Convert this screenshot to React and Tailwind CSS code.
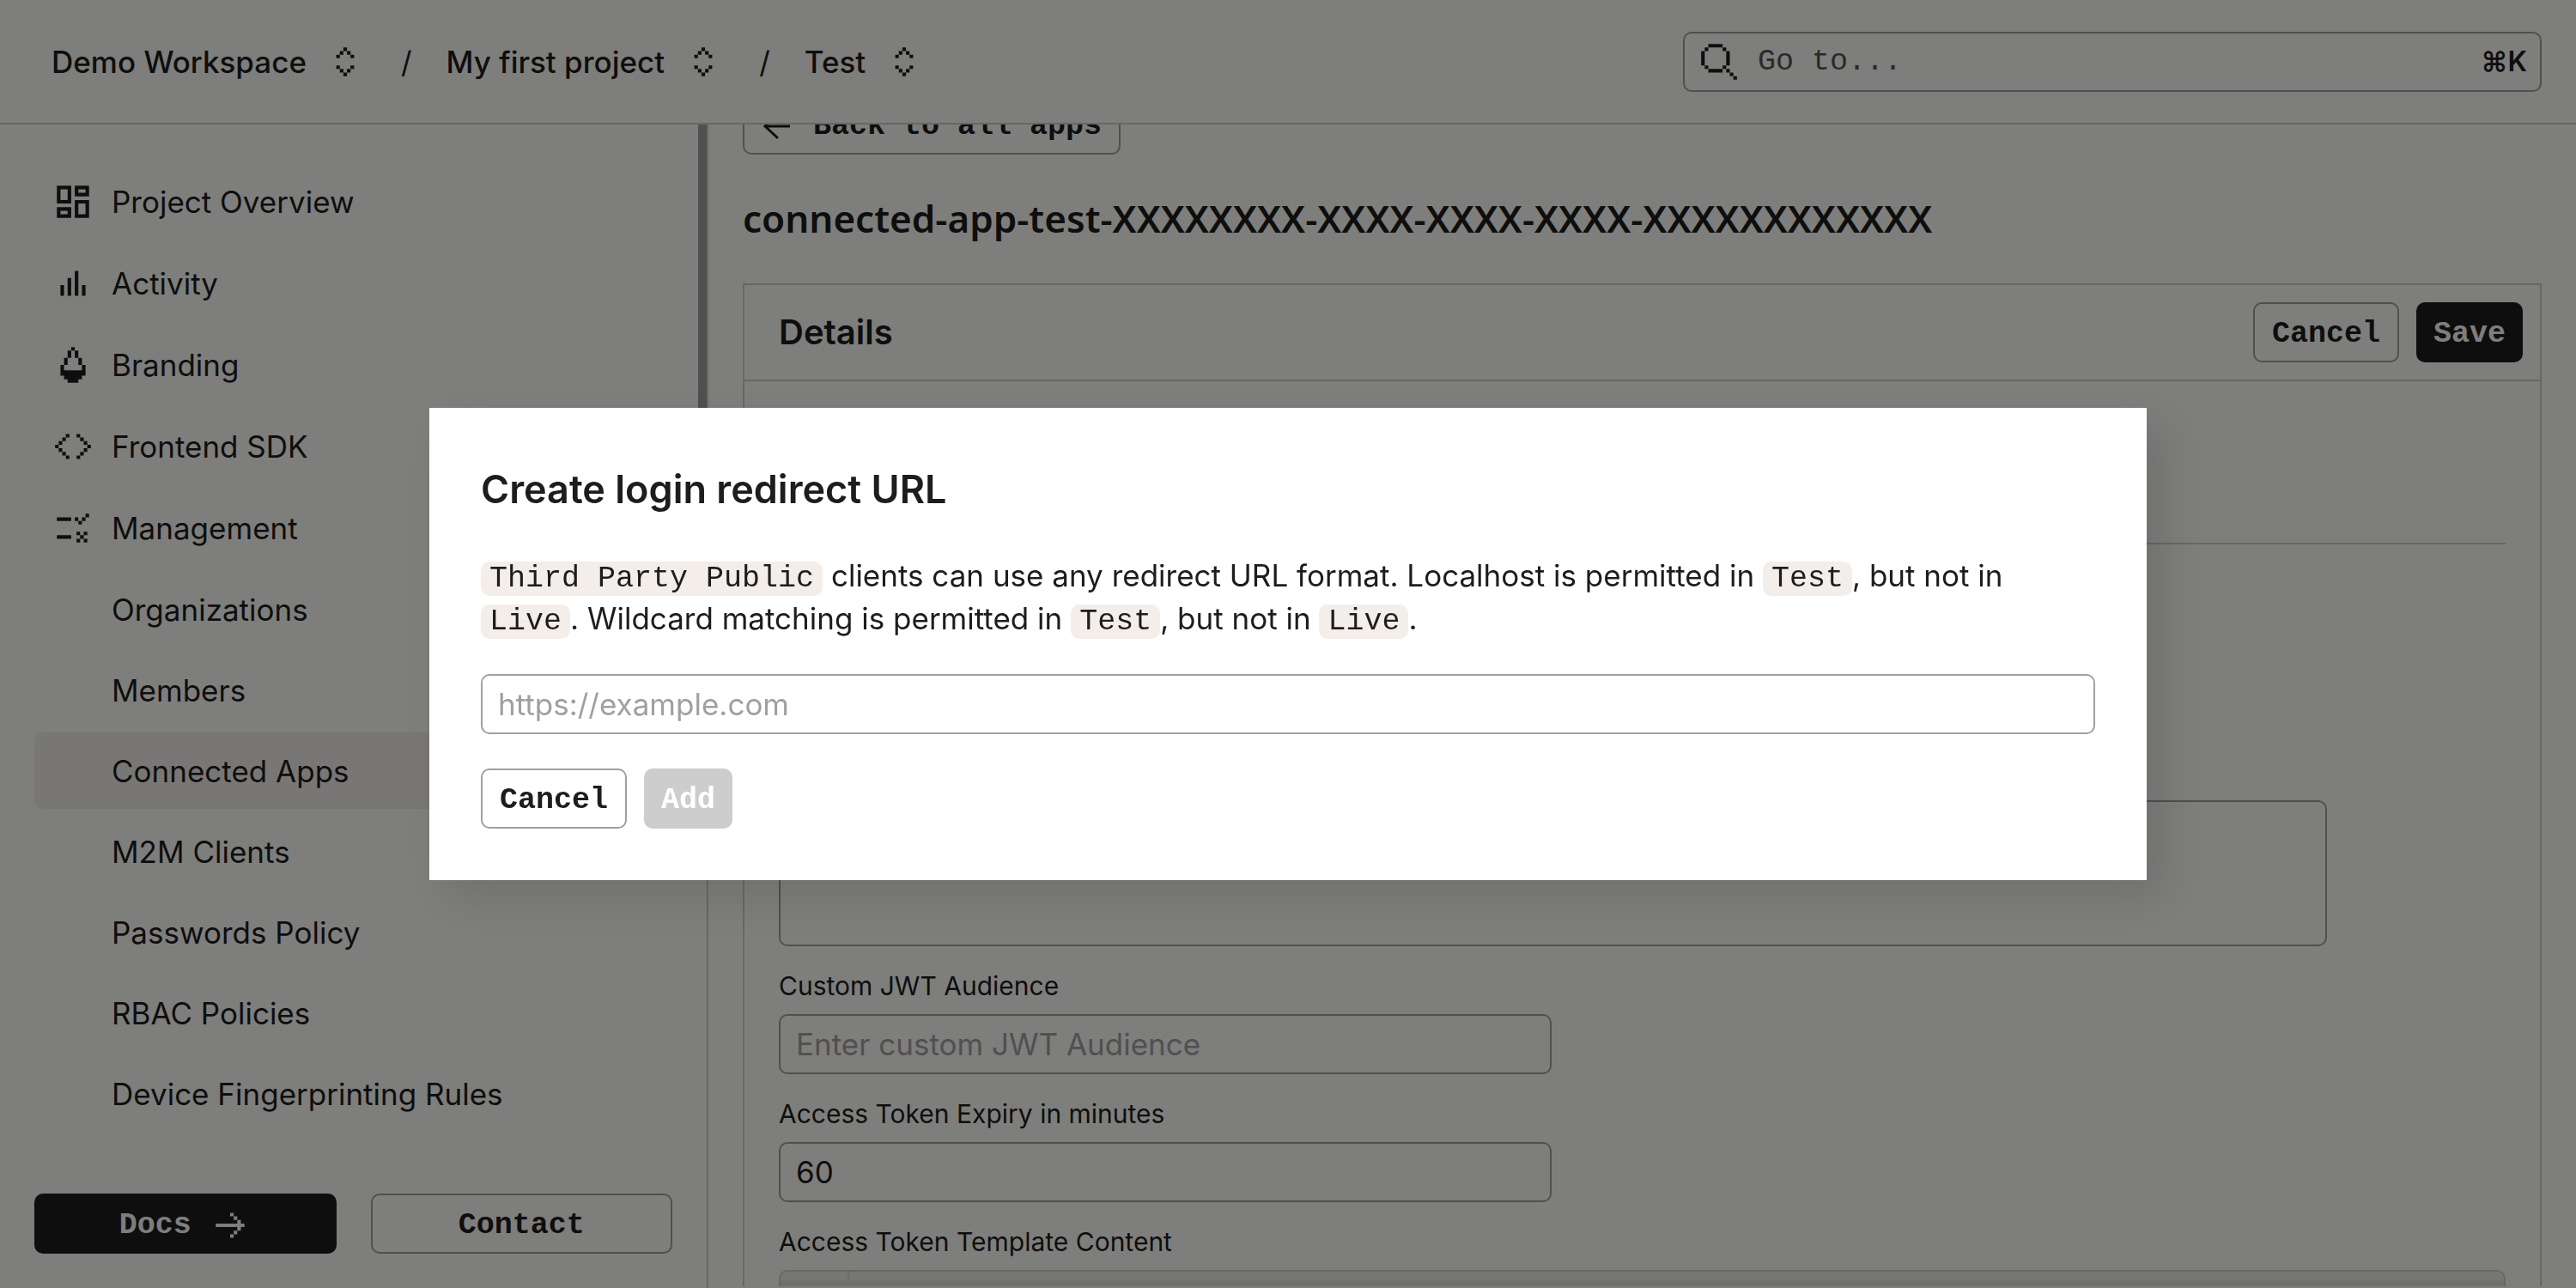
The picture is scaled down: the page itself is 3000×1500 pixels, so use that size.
const iconPaths = {
  dashboard:
    "M3 3h8v10H3zM5 5v6h4V5zM13 3h8v6h-8zM15 5v2h4V5zM3 15h8v6H3zM5 17v2h4v-2zM13 11h8v10h-8zM15 13v6h4v-6z",
  activity: "M5 13h2v6H5zM9 9h2v10H9zM13 5h2v14h-2zM17 13h2v6h-2z",
  branding:
    "M11 2h2v2h-2zM9 4h2v4H9zM13 4h2v4h-2zM7 8h2v4H7zM15 8h2v4h-2zM5 12h2v3h10v-3h2v6h-2v2h-2v2H9v-2H7v-2H5z",
  code:
    "M8 5h2v2H8zM6 7h2v2H6zM4 9h2v2H4zM2 11h2v2H2zM4 13h2v2H4zM6 15h2v2H6zM8 17h2v2H8zM14 5h2v2h-2zM16 7h2v2h-2zM18 9h2v2h-2zM20 11h2v2h-2zM18 13h2v2h-2zM16 15h2v2h-2zM14 17h2v2h-2z",
  management:
    "M3 6h8v2H3zM3 16h8v2H3zM13 6h2v2h-2zM15 8h2v2h-2zM17 6h2v2h-2zM19 4h2v2h-2zM14 14h2v2h-2zM18 14h2v2h-2zM16 16h2v2h-2zM14 18h2v2h-2zM18 18h2v2h-2z",
  upDown:
    "M11 4h2v2h-2zM9 6h2v2H9zM13 6h2v2h-2zM7 8h2v2H7zM15 8h2v2h-2zM7 14h2v2H7zM15 14h2v2h-2zM9 16h2v2H9zM13 16h2v2h-2zM11 18h2v2h-2z",
  search:
    "M6 2h8v2H6zM4 4h2v2H4zM14 4h2v2h-2zM2 6h2v8H2zM16 6h2v8h-2zM4 14h2v2H4zM14 14h2v2h-2zM6 16h8v2H6zM16 16h2v2h-2zM18 18h2v2h-2zM20 20h2v2h-2z",
  arrowRight:
    "M4 11h12V9h2v2h2v2h-2v2h-2v-2H4zM14 7h2v2h-2zM12 5h2v2h-2zM14 15h2v2h-2zM12 17h2v2h-2z",
};

const mainNav = [
  { icon: "dashboard", label: "Project Overview" },
  { icon: "activity", label: "Activity" },
  { icon: "branding", label: "Branding" },
  { icon: "code", label: "Frontend SDK" },
  { icon: "management", label: "Management" },
];

const managementNav = [
  "Organizations",
  "Members",
  "Connected Apps",
  "M2M Clients",
  "Passwords Policy",
  "RBAC Policies",
  "Device Fingerprinting Rules",
];

const mono = "font-['Liberation_Mono',monospace]";
const buttonBase = `${mono} flex h-[70px] items-center justify-center rounded-[10px] px-5 pt-1 font-bold`;
const outlineButton = `${buttonBase} border-2 border-[#a0a0a0]`;
const solidButton = `${buttonBase} bg-[#1d1d1d] text-[#fdfcf8]`;
const inputStyle =
  "h-[70px] w-full rounded-[10px] border-2 border-[#a0a0a0] bg-transparent px-[18px] placeholder:text-[#a0a0a0]";

function Icon({ name }) {
  return (
    <svg viewBox="0 0 24 24" className="size-[50px] shrink-0" fill="currentColor" fillRule="evenodd" aria-hidden="true">
      <path d={iconPaths[name]} />
    </svg>
  );
}

function Crumb({ label }) {
  return (
    <button type="button" className="flex items-center gap-5 font-medium">
      {label}
      <Icon name="upDown" />
    </button>
  );
}

function Code({ children }) {
  return (
    <code className={`${mono} rounded-[10px] bg-[#f3eeea] px-[10px] leading-none`}>{children}</code>
  );
}

function Header() {
  return (
    <header className="flex h-[145px] shrink-0 items-center justify-between border-b-2 border-[#cfcfcb] pr-10 pl-[60px]">
      <nav className="flex items-center gap-10">
        <Crumb label="Demo Workspace" />
        <span>/</span>
        <Crumb label="My first project" />
        <span>/</span>
        <Crumb label="Test" />
      </nav>
      <label className="flex h-[70px] w-[1000px] items-center gap-5 rounded-[10px] border-2 border-[#a0a0a0] px-[15px]">
        <Icon name="search" />
        <input
          type="search"
          aria-label="Go to"
          placeholder="Go to..."
          className={`${mono} min-w-0 flex-1 bg-transparent placeholder:text-[#555]`}
        />
        <kbd className="font-['Inter',sans-serif] text-[32px] font-semibold">⌘K</kbd>
      </label>
    </header>
  );
}

function Sidebar() {
  return (
    <aside className="relative flex w-[825px] shrink-0 flex-col justify-between border-r-2 border-[#cfcfcb] px-10 pt-[45px] pb-10">
      {/* Scroll thumb */}
      <div className="absolute top-0 right-0 h-[800px] w-[10px] bg-[#a0a0a0]" />

      <nav className="flex flex-col gap-[5px]">
        {mainNav.map((item) => (
          <a key={item.label} href="#" className="flex h-[90px] items-center gap-5 px-5">
            <Icon name={item.icon} />
            {item.label}
          </a>
        ))}
        {managementNav.map((label) => (
          <a
            key={label}
            href="#"
            className={`flex h-[89px] items-center rounded-[10px] pl-[90px] ${
              label === "Connected Apps" ? "bg-[#f3eeea]" : ""
            }`}
          >
            {label}
          </a>
        ))}
      </nav>

      <div className="grid grid-cols-2 gap-10">
        <a href="#" className={`${solidButton} gap-5`}>
          Docs
          <Icon name="arrowRight" />
        </a>
        <a href="#" className={outlineButton}>Contact</a>
      </div>
    </aside>
  );
}

function Field({ id, label, ...props }) {
  return (
    <div className="mt-[26px] w-[900px]">
      <label htmlFor={id} className="mb-[13px] block text-[30px] leading-10">{label}</label>
      <input id={id} className={inputStyle} {...props} />
    </div>
  );
}

function AppDetails() {
  return (
    <main className="mb-0.5 min-w-0 flex-1 overflow-hidden px-10">
      {/* Scrolled a little, so the back button runs under the header */}
      <div className="-mt-[35px]">
        <a href="#" className={`${outlineButton} w-fit gap-5`}>
          <svg viewBox="0 0 40 40" className="size-10" fill="none" stroke="currentColor" strokeWidth="3" aria-hidden="true">
            <path d="M33 20H3M19 5L4 20l15 14" />
          </svg>
          Back to all apps
        </a>
        <h1 className="mt-11 font-['Noto_Sans','Open_Sans',sans-serif] text-[44px] leading-[60px] font-semibold">
          connected-app-test-XXXXXXXX-XXXX-XXXX-XXXX-XXXXXXXXXXXX
        </h1>

        <section className="mt-[46px] border-2 border-[#cfcfcb]">
          <div className="flex items-center justify-between border-b-2 border-[#cfcfcb] py-5 pr-5 pl-10">
            <h2 className="text-[40px] font-semibold">Details</h2>
            <div className="flex gap-5">
              <button type="button" className={outlineButton}>Cancel</button>
              <button type="button" className={solidButton}>Save</button>
            </div>
          </div>

          <div className="px-10">
            <hr className="mt-[188px] mb-[298px] border-t-2 border-[#cfcfcb]" />
            <textarea
              aria-label="Description"
              className="block h-[170px] w-[1803px] max-w-full resize-none rounded-[10px] border-2 border-[#a0a0a0] p-5"
            />
            <Field id="audience" label="Custom JWT Audience" placeholder="Enter custom JWT Audience" />
            <Field id="expiry" label="Access Token Expiry in minutes" defaultValue="60" />

            <h3 className="mt-[26px] mb-[13px] text-[30px] leading-10">Access Token Template Content</h3>
            <div className="flex h-[400px] overflow-hidden rounded-[10px] border-2 border-[#cfcfcb] bg-[#eeede9]">
              <div className="w-20 border-r-2 border-[#dddcd8] pt-[10px]">
                <div className="h-[50px] bg-[#dfded9]" />
              </div>
              <div className="flex-1 pt-[10px]">
                <div className="h-[50px] bg-[#dfded9]" />
              </div>
            </div>
          </div>
        </section>
      </div>
    </main>
  );
}

function RedirectDialog() {
  return (
    <div className="fixed inset-0 flex items-center justify-center bg-black/50">
      <div
        role="dialog"
        aria-modal="true"
        aria-labelledby="dialog-title"
        className="w-2/3 bg-white p-[60px] shadow-[20px_20px_50px_rgba(0,0,0,0.12)]"
      >
        <h2 id="dialog-title" className="text-[45px] leading-[70px] font-semibold">
          Create login redirect URL
        </h2>
        <p className="mt-10">
          <Code>Third Party Public</Code> clients can use any redirect URL format. Localhost is
          permitted in <Code>Test</Code>, but not in <Code>Live</Code>. Wildcard matching is
          permitted in <Code>Test</Code>, but not in <Code>Live</Code>.
        </p>
        <input
          type="url"
          aria-label="Redirect URL"
          placeholder="https://example.com"
          className={`${inputStyle} mt-10`}
        />
        <div className="mt-10 flex gap-5">
          <button type="button" className={outlineButton}>Cancel</button>
          <button type="button" disabled className={`${buttonBase} bg-[#cdcdcd] text-white`}>
            Add
          </button>
        </div>
      </div>
    </div>
  );
}

export default function App() {
  return (
    <div className="flex h-screen flex-col bg-[#fdfcf8] font-['Inter',sans-serif] text-[35px] leading-[50px] text-[#1d1d1d]">
      <Header />
      <div className="flex min-h-0 flex-1">
        <Sidebar />
        <AppDetails />
      </div>
      <RedirectDialog />
    </div>
  );
}
